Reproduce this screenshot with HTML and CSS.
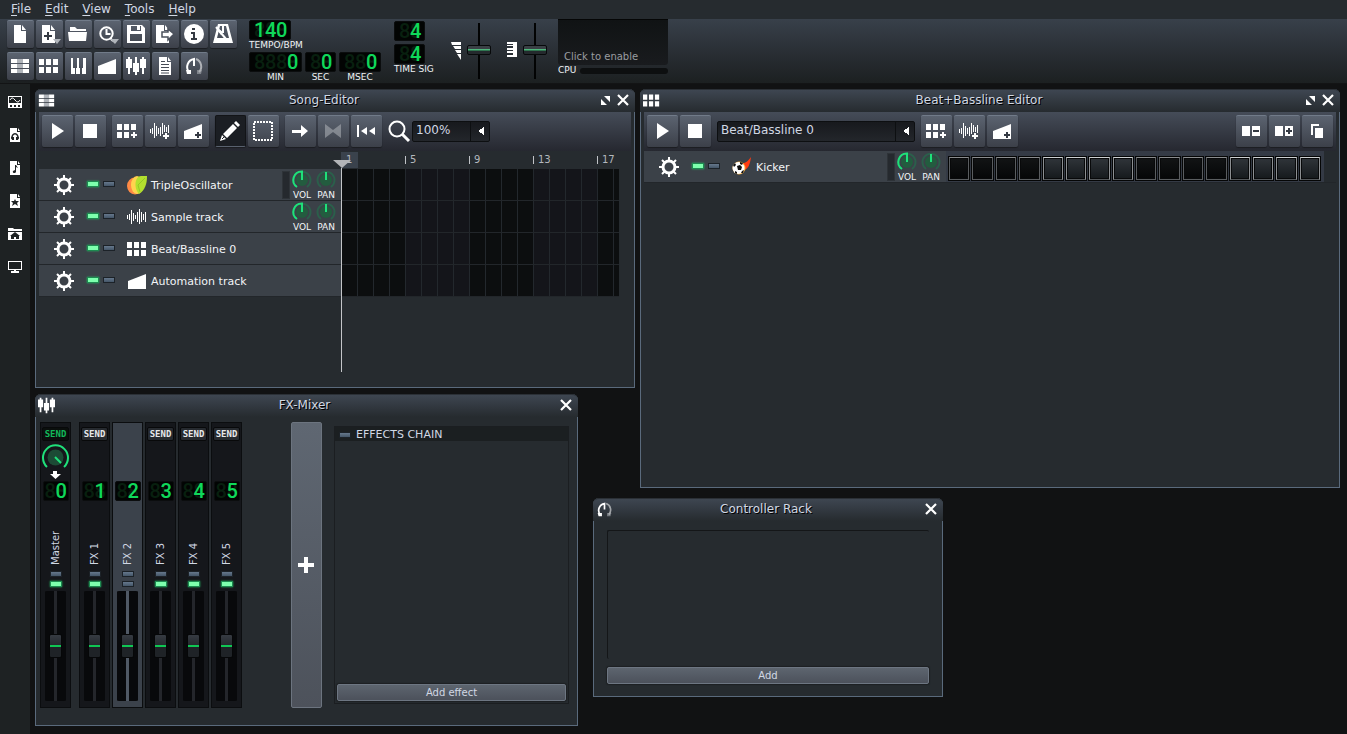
FILE: index.html
```html
<!DOCTYPE html>
<html lang="en">
  <head>
    <meta charset="UTF-8" />
    <meta name="viewport" content="width=device-width, initial-scale=1.0" />
    <title>LMMS</title>
    <link rel="stylesheet" href="styles.css">
  </head>
  <body>

<!-- Icon sprite -->
<svg class="sprite" aria-hidden="true">
  <symbol id="i-file" viewBox="0 0 20 20"><path d="M4 1h7v6h5v12H4zM12 1l4 5h-4z"/></symbol>
  <symbol id="i-new" viewBox="0 0 20 20"><path d="M3 1h8v6h5v12H3zM12 1l4 5h-4z"/><path class="dark" d="M8 8h2v3h3v2h-3v3H8v-3H5v-2h3z"/><path class="dim" d="M14 15h8l-4 5z"/></symbol>
  <symbol id="i-open" viewBox="0 0 20 20"><path d="M2 3h5l2 2h9v2H2zM0 8h19l-1 9H1z"/></symbol>
  <symbol id="i-recent" viewBox="0 0 20 20"><circle class="line" cx="9.500" cy="9.500" r="6.200"/><path class="line" d="M9.500 5v5h4M13 14l3 3"/><path class="dim" d="M13 15h9l-4 5z"/></symbol>
  <symbol id="i-save" viewBox="0 0 20 20"><path fill-rule="evenodd" d="M1 1h15l3 3v15H1zM5 2v5h10V2zM4 10v7h12v-7z"/><path d="M11 2h3v4h-3z"/></symbol>
  <symbol id="i-export" viewBox="0 0 20 20"><path d="M1 1h8v6h5v12H1zM10 1l4 5h-4z"/><path d="M7 8h6V5l6 5-6 6v-3H7z" stroke="#4a505b" stroke-width="1.500"/></symbol>
  <symbol id="i-info" viewBox="0 0 20 20"><circle cx="10" cy="10" r="10"/><path class="dark" d="M8 4h3v2H8zM7 8h4v6h2v2H7v-2h2v-4H7z"/></symbol>
  <symbol id="i-metro" viewBox="0 0 20 20"><path fill-rule="evenodd" d="M5 0h10l5 19H0zM7 2L4 14h12L13 2z"/><path class="line" d="M3 3l10 12"/><path d="M9 2h2v7H9zM6 5l4 3-2 3-3-4z"/></symbol>
  <symbol id="i-song" viewBox="0 0 20 20"><path d="M1 3h6v4H1zM1 8h6v4H1zM1 13h6v4H1zM13 3h6v4h-6zM13 8h6v4h-6zM13 13h6v4h-6z"/><path class="dim" d="M7 3h6v4H7zM7 8h6v4H7zM7 13h6v4H7z"/></symbol>
  <symbol id="i-bb" viewBox="0 0 20 20"><path d="M0 3h5v6H0zM7 3h5v6H7zM14 3h5v6h-5zM0 11h5v6H0zM7 11h5v6H7zM14 11h5v6h-5z"/></symbol>
  <symbol id="i-piano" viewBox="0 0 20 20"><path d="M3 2h2v10h2v6H3zM9 2h2v10h1v6H8v-6h1zM15 2h3v16h-4v-6h1z"/></symbol>
  <symbol id="i-auto" viewBox="0 0 20 20"><path d="M1 10L19 3v15H1z"/></symbol>
  <symbol id="i-mixer" viewBox="0 0 20 20"><path d="M2 1h2v2h2v9H4v6H2v-6H0V3h2zM9 1h2v6h2v9h-2v3H9v-3H7V7h2zM16 1h2v2h2v9h-2v6h-2v-6h-2V3h2z"/></symbol>
  <symbol id="i-notes" viewBox="0 0 20 20"><path d="M4 1h8v5h4v13H4zM13 1l3 4h-3z"/><path class="slit" d="M6 5.500h4M6 8.500h8M6 11.500h8M6 14.500h8M6 17h8"/></symbol>
  <symbol id="i-rack" viewBox="0 0 20 20"><path class="line" d="M5 16A8 8 0 0 1 10 3v7"/><path d="M2 14h5v4H3z"/><path class="line half" d="M12 3a8 8 0 0 1 3 13"/><path class="dim half" d="M13 14h5l-1 4h-4z"/></symbol>
  <symbol id="i-play" viewBox="0 0 20 20"><path d="M5 2l12 8-12 8z"/></symbol>
  <symbol id="i-stop" viewBox="0 0 20 20"><path d="M3 3h14v14H3z"/></symbol>
  <symbol id="i-bbadd" viewBox="0 0 20 20"><path d="M0 3h5v6H0zM7 3h5v6H7zM14 3h5v6h-5zM0 11h5v6H0zM7 11h5v6H7zM16 11h2v2h2v2h-2v2h-2v-2h-2v-2h2z"/></symbol>
  <symbol id="i-wave" viewBox="0 0 20 20"><path d="M0 8h1v4H0zM2 7h1v6H2zM4 3h1v14H4zM6 6h1v8H6zM8 8h1v4H8zM10 5h1v10h-1zM12 2h1v15h-1zM14 5h1v10h-1zM16 7h1v6h-1zM18 5h1v10h-1z"/></symbol>
  <symbol id="i-waveadd" viewBox="0 0 20 20"><path d="M0 8h1v4H0zM2 7h1v6H2zM4 2h1v15H4zM6 5h1v10H6zM8 7h1v6H8zM10 6h1v9h-1zM12 2h1v11h-1zM14 4h1v7h-1zM16 6h1v5h-1zM18 4h1v8h-1zM15 12h2v2h2v2h-2v2h-2v-2h-2v-2h2z"/></symbol>
  <symbol id="i-autoadd" viewBox="0 0 20 20"><path d="M1 10L19 3v15H1z"/><path class="dark" d="M14 11h2v2h2v2h-2v2h-2v-2h-2v-2h2z"/></symbol>
  <symbol id="i-pencil" viewBox="0 0 20 20"><path d="M13 3l4 4L7 17l-4-4zM14 2l2-2 4 4-2 2zM2 14l4 4-6 2z"/><path d="M4 16l-2 2" stroke="#1b1e23"/></symbol>
  <symbol id="i-select" viewBox="0 0 20 20"><rect x="1" y="1" width="18" height="18" fill="none" stroke="#fff" stroke-width="2" stroke-dasharray="2 1"/></symbol>
  <symbol id="i-arrow" viewBox="0 0 20 20"><path d="M2 9h9V4l7 6-7 6v-4H2z"/></symbol>
  <symbol id="i-bowtie" viewBox="0 0 20 20"><path class="dim half" d="M2 3l8 6 8-6v14l-8-6-8 6z"/></symbol>
  <symbol id="i-rewind" viewBox="0 0 20 20"><path d="M1 4h2v12H1zM11 6v8l-6-4zM19 6v8l-6-4z"/></symbol>
  <symbol id="i-zoom" viewBox="0 0 22 22"><circle class="line" cx="9" cy="9" r="7.500"/><path d="M14 14l7 7" stroke="#fff" stroke-width="3"/></symbol>
  <symbol id="i-minus" viewBox="0 0 20 20"><path d="M1 5h8v10H1zM11 5h8v10h-8z"/><path class="dark" d="M12 9h6v2h-6z"/></symbol>
  <symbol id="i-plus" viewBox="0 0 20 20"><path d="M1 5h8v10H1zM11 5h8v10h-8z"/><path class="dark" d="M14 7h2v2h2v2h-2v2h-2v-2h-2V9h2z"/></symbol>
  <symbol id="i-clone" viewBox="0 0 20 20"><path d="M4 3h8v2H6v9H4zM8 7h8v10H8z"/></symbol>
  <symbol id="i-close" viewBox="0 0 12 12"><path d="M1 1l10 10M11 1L1 11" stroke="#fff" stroke-width="2.200"/></symbol>
  <symbol id="i-max" viewBox="0 0 9 9"><path d="M3 0h6v6zM0 3l6 6H0z"/></symbol>
  <symbol id="i-gear" viewBox="0 0 22 22"><circle cx="11" cy="11" r="6" fill="none" stroke="#fff" stroke-width="3"/><path d="M11 1v4M11 17v4M1 11h4M17 11h4M4 4l3 3M15 15l3 3M18 4l-3 3M7 15l-3 3" stroke="#fff" stroke-width="2"/></symbol>
  <symbol id="i-osc" viewBox="0 0 20 20"><ellipse cx="8" cy="11" rx="8" ry="8.500" fill="#ff8a45"/><ellipse cx="10" cy="10" rx="6" ry="9" fill="#ffd34e"/><path d="M20 1c0 8-2 14-8 18C7 14 7 2 14 1z" fill="#b3e02f"/><path d="M18 3l-7 7 2 7" stroke="#93c926" fill="none"/></symbol>
  <symbol id="i-kick" viewBox="0 0 20 20"><path d="M9 6c4 1 7-2 10-6-1 8-3 12-7 13z" fill="#ff3a12"/><circle cx="7" cy="11" r="6.500" fill="#ffb23a"/><circle cx="6.500" cy="11" r="6" fill="#fff"/><path fill="#111" d="M5 9l3-1 2 2-1 3-3 0zM1 8l2-2 1 2-2 2zM8 5l3 1-1 2-2-1zM3 14l2 1 0 2-2-1zM10 14l2-1-1 3-2 0z"/></symbol>
  <symbol id="k-vol" viewBox="0 0 20 20"><circle cx="10" cy="10" r="6" fill="#235c3f"/><path d="M5 17A8.500 8.500 0 1 1 15 17" fill="none" stroke="#2b5f4b" stroke-width="2"/><path d="M5 17A8.500 8.500 0 0 1 10 1.500V10" fill="none" stroke="#1fe07a" stroke-width="2"/></symbol>
  <symbol id="k-pan" viewBox="0 0 20 20"><circle cx="10" cy="10" r="6" fill="#235c3f"/><path d="M5 17A8.500 8.500 0 1 1 15 17" fill="none" stroke="#2b5f4b" stroke-width="2"/><path d="M10 2v8" stroke="#1fe07a" stroke-width="2"/></symbol>
</svg>

<nav class="menubar">
  <button><u>F</u>ile</button>
  <button><u>E</u>dit</button>
  <button><u>V</u>iew</button>
  <button><u>T</u>ools</button>
  <button><u>H</u>elp</button>
</nav>

<header class="main-toolbar">
  <div class="tool-grid">
    <button class="btn small" aria-label="New project"><svg><use href="#i-file"/></svg></button>
    <button class="btn small" aria-label="New from template"><svg><use href="#i-new"/></svg></button>
    <button class="btn small" aria-label="Open"><svg><use href="#i-open"/></svg></button>
    <button class="btn small" aria-label="Recent projects"><svg><use href="#i-recent"/></svg></button>
    <button class="btn small" aria-label="Save"><svg><use href="#i-save"/></svg></button>
    <button class="btn small" aria-label="Export"><svg><use href="#i-export"/></svg></button>
    <button class="btn small" aria-label="What's this"><svg><use href="#i-info"/></svg></button>
    <button class="btn small" aria-label="Metronome"><svg><use href="#i-metro"/></svg></button>
    <button class="btn small" aria-label="Song-Editor"><svg><use href="#i-song"/></svg></button>
    <button class="btn small" aria-label="Beat+Bassline Editor"><svg><use href="#i-bb"/></svg></button>
    <button class="btn small" aria-label="Piano-Roll"><svg><use href="#i-piano"/></svg></button>
    <button class="btn small" aria-label="Automation Editor"><svg><use href="#i-auto"/></svg></button>
    <button class="btn small" aria-label="FX-Mixer"><svg><use href="#i-mixer"/></svg></button>
    <button class="btn small" aria-label="Project notes"><svg><use href="#i-notes"/></svg></button>
    <button class="btn small" aria-label="Controller Rack"><svg><use href="#i-rack"/></svg></button>
  </div>

  <div class="clock">
    <div class="lcd-box left">
      <div class="lcd"><span>1</span><span>4</span><span>0</span></div>
      <div class="lcd-label">TEMPO/BPM</div>
    </div>
    <div class="time">
      <div class="lcd-box">
        <div class="lcd"><span></span><span></span><span></span><span>0</span></div>
        <div class="lcd-label">MIN</div>
      </div>
      <div class="lcd-box">
        <div class="lcd"><span></span><span>0</span></div>
        <div class="lcd-label">SEC</div>
      </div>
      <div class="lcd-box">
        <div class="lcd"><span></span><span></span><span>0</span></div>
        <div class="lcd-label">MSEC</div>
      </div>
    </div>
  </div>

  <div class="timesig">
    <div class="lcd"><span></span><span>4</span></div>
    <div class="lcd"><span></span><span>4</span></div>
    <div class="lcd-label">TIME SIG</div>
  </div>

  <div class="master">
    <svg width="10" height="18" viewBox="0 0 10 18"><path d="M0 0h10v3H1zM2 4h8v3H4zM4 8h6v3H6zM6 12h4v6z"/></svg>
    <input type="range" class="v-slider" aria-label="Master volume" value="53">
    <svg width="10" height="15" viewBox="0 0 10 15"><path d="M0 0h10v15H0v-2h6v-2H0V9h6V8H0V6h6V4H0V3h6V2H0z"/></svg>
    <input type="range" class="v-slider" aria-label="Master pitch" value="53">
  </div>

  <div class="monitor">
    <button class="scope">Click to enable</button>
    <div class="cpu"><span>CPU</span><div class="cpu-bar"></div></div>
  </div>
</header>

<div class="workspace">
  <aside class="sidebar">
    <button aria-label="Instruments"><svg viewBox="0 0 14 14"><path fill-rule="evenodd" d="M0 1h14v12H0zM1 2v6h12V2z"/><path d="M2 5q2-4 5 0t5 0" fill="none" stroke="#fff"/><path class="hole" d="M2 10h2v2H2zM6 10h2v2H6zM10 10h2v2h-2z"/></svg></button>
    <button aria-label="Samples"><svg viewBox="0 0 14 14"><path d="M2 0h7v4h3v10H2zM10 0l2 3h-2z"/><path d="M4 11c-1-7 7-7 6 0" fill="none" stroke="#1e2223" stroke-width="1.500"/><path class="hole" d="M3 9h3v3H4zM8 9h3l-1 3H8z"/></svg></button>
    <button aria-label="Presets"><svg viewBox="0 0 14 14"><path d="M2 0h7v4h3v10H2zM10 0l2 3h-2z"/><path class="hole" d="M7 4h1l2 3-2-1v5c-1 2-4 1-3-1l2-1z"/></svg></button>
    <button aria-label="Favourites"><svg viewBox="0 0 14 14"><path d="M2 0h7v4h3v10H2zM10 0l2 3h-2z"/><path class="hole" d="M7 5l1 2h3L9 9l1 3-3-2-3 2 1-3-2-2h3z"/></svg></button>
    <button aria-label="Home"><svg viewBox="0 0 14 14"><path d="M0 1h5l1 1h8v2H0zM0 5h14v8H0z"/><path class="hole" d="M7 5l5 4h-1v3H8v-2H6v2H3V9H2z"/></svg></button>
    <button aria-label="Computer"><svg viewBox="0 0 14 14"><path fill-rule="evenodd" d="M0 1h14v9H0zM1 2v7h12V2zM6 10h2v1h3v2H3v-2h3z"/></svg></button>
  </aside>

  <main class="desktop">

    <!-- Song editor -->
    <section class="window song">
      <div class="titlebar">
        <svg class="win-icon"><use href="#i-song"/></svg>
        <h2>Song-Editor</h2>
        <button aria-label="Maximize"><svg width="9" height="9"><use href="#i-max"/></svg></button>
        <button aria-label="Close"><svg width="12" height="12"><use href="#i-close"/></svg></button>
      </div>
      <div class="content">
        <div class="toolbar">
          <div class="group">
            <button class="btn" aria-label="Play"><svg><use href="#i-play"/></svg></button>
            <button class="btn" aria-label="Stop"><svg><use href="#i-stop"/></svg></button>
          </div>
          <div class="group">
            <button class="btn" aria-label="Add beat/bassline"><svg><use href="#i-bbadd"/></svg></button>
            <button class="btn" aria-label="Add sample track"><svg><use href="#i-waveadd"/></svg></button>
            <button class="btn" aria-label="Add automation track"><svg><use href="#i-autoadd"/></svg></button>
          </div>
          <div class="group">
            <button class="btn pressed" aria-label="Draw mode"><svg><use href="#i-pencil"/></svg></button>
            <button class="btn" aria-label="Edit mode"><svg><use href="#i-select"/></svg></button>
          </div>
          <div class="group">
            <button class="btn" aria-label="Auto scroll"><svg><use href="#i-arrow"/></svg></button>
            <button class="btn" aria-label="Loop points"><svg><use href="#i-bowtie"/></svg></button>
            <button class="btn" aria-label="Back to start"><svg><use href="#i-rewind"/></svg></button>
          </div>
          <div class="group zoom">
            <label for="zoom"><svg width="22" height="22"><use href="#i-zoom"/></svg></label>
            <select id="zoom" class="combo" aria-label="Zoom"><option>100%</option></select>
          </div>
        </div>

        <div class="ruler">
          <span class="current">1</span><span>5</span><span>9</span><span>13</span><span>17</span>
        </div>

        <div class="tracks">
          <div class="track">
            <div class="track-head">
              <i class="grip"></i>
              <button class="gear" aria-label="Track settings"><svg><use href="#i-gear"/></svg></button>
              <input type="checkbox" class="led" aria-label="Mute" checked><input type="checkbox" class="led" aria-label="Solo">
              <svg class="track-icon"><use href="#i-osc"/></svg>
              <span class="track-name">TripleOscillator</span>
              <i class="activity"></i>
              <div class="knob"><svg><use href="#k-vol"/></svg>VOL</div>
              <div class="knob"><svg><use href="#k-pan"/></svg>PAN</div>
            </div>
            <div class="beats"></div>
          </div>
          <div class="track">
            <div class="track-head">
              <i class="grip"></i>
              <button class="gear" aria-label="Track settings"><svg><use href="#i-gear"/></svg></button>
              <input type="checkbox" class="led" aria-label="Mute" checked><input type="checkbox" class="led" aria-label="Solo">
              <svg class="track-icon"><use href="#i-wave"/></svg>
              <span class="track-name">Sample track</span>
              <div class="knob"><svg><use href="#k-vol"/></svg>VOL</div>
              <div class="knob"><svg><use href="#k-pan"/></svg>PAN</div>
            </div>
            <div class="beats"></div>
          </div>
          <div class="track">
            <div class="track-head">
              <i class="grip"></i>
              <button class="gear" aria-label="Track settings"><svg><use href="#i-gear"/></svg></button>
              <input type="checkbox" class="led" aria-label="Mute" checked><input type="checkbox" class="led" aria-label="Solo">
              <svg class="track-icon"><use href="#i-bb"/></svg>
              <span class="track-name">Beat/Bassline 0</span>
            </div>
            <div class="beats"></div>
          </div>
          <div class="track">
            <div class="track-head">
              <i class="grip"></i>
              <button class="gear" aria-label="Track settings"><svg><use href="#i-gear"/></svg></button>
              <input type="checkbox" class="led" aria-label="Mute" checked><input type="checkbox" class="led" aria-label="Solo">
              <svg class="track-icon"><use href="#i-auto"/></svg>
              <span class="track-name">Automation track</span>
            </div>
            <div class="beats"></div>
          </div>
          <div class="playhead"></div>
        </div>
      </div>
    </section>

    <!-- Beat+Bassline editor -->
    <section class="window bb">
      <div class="titlebar">
        <svg class="win-icon"><use href="#i-bb"/></svg>
        <h2>Beat+Bassline Editor</h2>
        <button aria-label="Maximize"><svg width="9" height="9"><use href="#i-max"/></svg></button>
        <button aria-label="Close"><svg width="12" height="12"><use href="#i-close"/></svg></button>
      </div>
      <div class="content">
        <div class="toolbar">
          <div class="group">
            <button class="btn" aria-label="Play"><svg><use href="#i-play"/></svg></button>
            <button class="btn" aria-label="Stop"><svg><use href="#i-stop"/></svg></button>
          </div>
          <select class="combo wide" aria-label="Pattern"><option>Beat/Bassline 0</option></select>
          <div class="group">
            <button class="btn" aria-label="Add beat/bassline"><svg><use href="#i-bbadd"/></svg></button>
            <button class="btn" aria-label="Add sample track"><svg><use href="#i-waveadd"/></svg></button>
            <button class="btn" aria-label="Add automation track"><svg><use href="#i-autoadd"/></svg></button>
          </div>
          <div class="group end">
            <button class="btn" aria-label="Remove steps"><svg><use href="#i-minus"/></svg></button>
            <button class="btn" aria-label="Add steps"><svg><use href="#i-plus"/></svg></button>
            <button class="btn" aria-label="Clone steps"><svg><use href="#i-clone"/></svg></button>
          </div>
        </div>
        <div class="track">
          <div class="track-head">
            <i class="grip"></i>
            <button class="gear" aria-label="Track settings"><svg><use href="#i-gear"/></svg></button>
            <input type="checkbox" class="led" aria-label="Mute" checked><input type="checkbox" class="led" aria-label="Solo">
            <svg class="track-icon"><use href="#i-kick"/></svg>
            <span class="track-name">Kicker</span>
            <i class="activity"></i>
            <div class="knob"><svg><use href="#k-vol"/></svg>VOL</div>
            <div class="knob"><svg><use href="#k-pan"/></svg>PAN</div>
          </div>
          <div class="steps">
            <input type="checkbox" aria-label="Step 1"><input type="checkbox" aria-label="Step 2"><input type="checkbox" aria-label="Step 3"><input type="checkbox" aria-label="Step 4">
            <input type="checkbox" aria-label="Step 5"><input type="checkbox" aria-label="Step 6"><input type="checkbox" aria-label="Step 7"><input type="checkbox" aria-label="Step 8">
            <input type="checkbox" aria-label="Step 9"><input type="checkbox" aria-label="Step 10"><input type="checkbox" aria-label="Step 11"><input type="checkbox" aria-label="Step 12">
            <input type="checkbox" aria-label="Step 13"><input type="checkbox" aria-label="Step 14"><input type="checkbox" aria-label="Step 15"><input type="checkbox" aria-label="Step 16">
          </div>
        </div>
      </div>
    </section>

    <!-- FX mixer -->
    <section class="window mixer">
      <div class="titlebar">
        <svg class="win-icon"><use href="#i-mixer"/></svg>
        <h2>FX-Mixer</h2>
        <button aria-label="Close"><svg width="12" height="12"><use href="#i-close"/></svg></button>
      </div>
      <div class="mixer-body">
        <div class="channel master-ch">
          <button class="send on">SEND</button>
          <div class="send-knob">
            <svg width="27" height="27" viewBox="0 0 27 27"><circle cx="13.500" cy="13.500" r="8" fill="#1c4b35"/><path d="M5 23A12.500 12.500 0 1 1 22 23" fill="none" stroke="#1fe07a" stroke-width="2"/><path d="M13 13l6 6" stroke="#1fe07a" stroke-width="2"/></svg>
            <svg width="11" height="8" viewBox="0 0 11 8"><path d="M3 0h4v3h4L5.500 8 0 3h3z"/></svg>
          </div>
          <div class="lcd"><span></span><span>0</span></div>
          <div class="ch-name">Master</div>
          <input type="checkbox" class="led" aria-label="Solo Master"><input type="checkbox" class="led" aria-label="Enable Master" checked>
          <input type="range" class="fader" aria-label="Master level">
        </div>
        <div class="channel">
          <button class="send">SEND</button>
          <div class="send-knob"></div>
          <div class="lcd"><span></span><span>1</span></div>
          <div class="ch-name">FX 1</div>
          <input type="checkbox" class="led" aria-label="Solo FX 1"><input type="checkbox" class="led" aria-label="Enable FX 1" checked>
          <input type="range" class="fader" aria-label="FX 1 level">
        </div>
        <div class="channel selected">
          <div class="send-gap"></div>
          <div class="send-knob"></div>
          <div class="lcd"><span></span><span>2</span></div>
          <div class="ch-name">FX 2</div>
          <input type="checkbox" class="led" aria-label="Solo FX 2"><input type="checkbox" class="led" aria-label="Enable FX 2">
          <input type="range" class="fader" aria-label="FX 2 level">
        </div>
        <div class="channel">
          <button class="send">SEND</button>
          <div class="send-knob"></div>
          <div class="lcd"><span></span><span>3</span></div>
          <div class="ch-name">FX 3</div>
          <input type="checkbox" class="led" aria-label="Solo FX 3"><input type="checkbox" class="led" aria-label="Enable FX 3" checked>
          <input type="range" class="fader" aria-label="FX 3 level">
        </div>
        <div class="channel">
          <button class="send">SEND</button>
          <div class="send-knob"></div>
          <div class="lcd"><span></span><span>4</span></div>
          <div class="ch-name">FX 4</div>
          <input type="checkbox" class="led" aria-label="Solo FX 4"><input type="checkbox" class="led" aria-label="Enable FX 4" checked>
          <input type="range" class="fader" aria-label="FX 4 level">
        </div>
        <div class="channel">
          <button class="send">SEND</button>
          <div class="send-knob"></div>
          <div class="lcd"><span></span><span>5</span></div>
          <div class="ch-name">FX 5</div>
          <input type="checkbox" class="led" aria-label="Solo FX 5"><input type="checkbox" class="led" aria-label="Enable FX 5" checked>
          <input type="range" class="fader" aria-label="FX 5 level">
        </div>
        <button class="add-channel" aria-label="Add channel"><svg width="16" height="16" viewBox="0 0 16 16"><path d="M6 0h4v6h6v4h-6v6H6v-6H0V6h6z"/></svg></button>
        <div class="effects">
          <label class="effects-head"><input type="checkbox" class="led">EFFECTS CHAIN</label>
          <div class="effects-list"></div>
          <button class="wide-btn">Add effect</button>
        </div>
      </div>
    </section>

    <!-- Controller rack -->
    <section class="window rack">
      <div class="titlebar">
        <svg class="win-icon"><use href="#i-rack"/></svg>
        <h2>Controller Rack</h2>
        <button aria-label="Close"><svg width="12" height="12"><use href="#i-close"/></svg></button>
      </div>
      <div class="rack-body">
        <div class="rack-list"></div>
        <button class="wide-btn">Add</button>
      </div>
    </section>

  </main>
</div>
  </body>
</html>
```
FILE: styles.css
```css
* {
  box-sizing: border-box;
}

body {
  margin: 0;
  min-height: 100vh;
  display: flex;
  flex-direction: column;
  background: #111213;
  color: #d1d8e4;
  font-family: "DejaVu Sans", sans-serif;
  font-size: 11px;
}

button {
  margin: 0;
  padding: 0;
  border: 0;
  background: none;
  color: inherit;
  font: inherit;
  cursor: pointer;
}

input {
  margin: 0;
}

svg {
  display: block;
  fill: #fff;
  flex: none;
  overflow: visible;
}

symbol {
  overflow: visible;
}

.sprite {
  position: absolute;
  width: 0;
  height: 0;
}

.line {
  fill: none;
  stroke: #fff;
  stroke-width: 2;
}
.dim {
  fill: #b0b4ba;
}
.half {
  opacity: 0.55;
}
.dark {
  fill: #353a43;
}
.slit {
  stroke: #454b56;
}
.hole {
  fill: #1e2223;
}

/* menu + main toolbar */
.menubar {
  display: flex;
  gap: 14px;
  height: 19px;
  padding: 0 11px 2px;
  background: #262b2f;
  font-size: 12px;
  line-height: 16px;
}
.menubar u {
  text-underline-offset: 2px;
}

.main-toolbar {
  display: flex;
  height: 65px;
  padding-left: 7px;
  background: linear-gradient(#38404a, #272c31 60%, #1c2021);
  border-bottom: 1px solid #131415;
}

.tool-grid {
  display: grid;
  grid-template-columns: repeat(8, 27px);
  gap: 4px 2px;
  align-content: start;
  padding-top: 1px;
  width: 242px;
}

.btn {
  display: flex;
  align-items: center;
  justify-content: center;
  width: 31px;
  height: 32px;
  padding: 0 1px 1px 0;
  border-top: 1px solid #717b89;
  border-radius: 2px;
  background: linear-gradient(#5b6370, #3c4049);
  box-shadow: 0 1px 1px #1b1d21;
}
.btn svg {
  width: 20px;
  height: 20px;
}
.btn.small {
  width: 27px;
  height: 28px;
}
.btn.pressed {
  border: 1px solid #121417;
  border-bottom-color: #59616e;
  background: #1b1e23;
}

.clock {
  display: flex;
  flex-direction: column;
  gap: 2px;
  padding-top: 1px;
  width: 145px;
}
.time {
  display: flex;
  gap: 3px;
}
.lcd-box {
  display: flex;
  flex-direction: column;
  align-items: center;
}
.lcd-box.left {
  align-items: flex-start;
}
.lcd-label {
  font-size: 9px;
  line-height: 10px;
  color: #f0f2f5;
  white-space: nowrap;
}

.lcd {
  display: flex;
  width: max-content;
  height: 20px;
  padding: 0 3px 0 4px;
  border: 1px solid #0b0d0e;
  border-radius: 2px;
  background: #020403;
  font-family: Roboto, sans-serif;
  font-size: 20px;
  font-weight: 500;
  line-height: 18px;
  color: #0fd85a;
}
.lcd span {
  position: relative;
  isolation: isolate;
  width: 11px;
  height: 18px;
  text-align: center;
}
/* unlit segments sit behind each digit */
.lcd span::before {
  content: "8";
  position: absolute;
  inset: 0;
  z-index: -1;
  color: #08200f;
}

.timesig {
  display: flex;
  flex-direction: column;
  gap: 3px;
  padding-top: 2px;
  width: 57px;
}
.timesig .lcd-label {
  margin-top: -3px;
}

.master {
  display: flex;
  align-items: flex-start;
  gap: 6px;
  width: 107px;
}
.master svg {
  margin-top: 23px;
}
.v-slider {
  appearance: none;
  writing-mode: vertical-lr;
  direction: rtl;
  width: 24px;
  height: 56px;
  margin: 4px 10px 0 0;
  background: linear-gradient(#020303, #020303) center / 2px 100% no-repeat;
}
.v-slider::-webkit-slider-thumb {
  appearance: none;
  width: 24px;
  height: 10px;
  border: 1px solid #07090a;
  border-radius: 2px;
  background: linear-gradient(#3a4045 3px, #4fb87c 3px 4px, #2f7550 4px 5px, #24292d 5px);
}

.monitor {
  width: 110px;
}
.scope {
  display: flex;
  align-items: flex-end;
  width: 110px;
  height: 46px;
  padding: 0 6px 1px;
  border-top: 1px solid #050606;
  border-radius: 0 0 3px 3px;
  background: linear-gradient(#101314, #191b1e);
  color: #9a9da0;
  font-size: 10px;
  line-height: 14px;
  white-space: nowrap;
}
.cpu {
  display: flex;
  gap: 4px;
  align-items: center;
  font-size: 9px;
  line-height: 11px;
  color: #f0f2f5;
}
.cpu-bar {
  flex: 1;
  height: 6px;
  border-radius: 3px;
  background: #0d0f10;
}

/* sidebar + desktop */
.workspace {
  flex: 1;
  display: flex;
}
.sidebar {
  display: flex;
  flex-direction: column;
  gap: 19px;
  width: 30px;
  padding-top: 11px;
  align-items: center;
  background: #1e2223;
}
.sidebar svg {
  width: 14px;
  height: 14px;
}
.desktop {
  position: relative;
  flex: 1;
  overflow: hidden;
}

.window {
  position: absolute;
  display: flex;
  flex-direction: column;
  background: #262b2f;
  border: 1px solid #5a6a7c;
  border-top: 0;
  border-radius: 6px 6px 0 0;
}
.song {
  left: 5px;
  top: 5px;
  width: 600px;
  height: 299px;
}
.bb {
  left: 610px;
  top: 5px;
  width: 700px;
  height: 399px;
}
.mixer {
  left: 5px;
  top: 310px;
  width: 543px;
  height: 332px;
}
.rack {
  left: 563px;
  top: 414px;
  width: 350px;
  height: 199px;
}

.titlebar {
  display: flex;
  align-items: center;
  height: 23px;
  margin: 0 -1px;
  padding: 0 3px 2px;
  border-top: 1px solid #2b3036;
  border-radius: 6px 6px 0 0;
  background: linear-gradient(#3e4651, #262b2f);
}
.titlebar h2 {
  flex: 1;
  margin: 0 3px 0 0;
  font-size: 12px;
  font-weight: normal;
  line-height: 20px;
  text-align: center;
  text-shadow: 1px 1px 0 #000;
}
.titlebar button {
  display: flex;
  align-items: center;
  justify-content: center;
  width: 18px;
  height: 18px;
}
.win-icon {
  width: 17px;
  height: 17px;
}

.content {
  padding: 0 3px;
}
.toolbar {
  display: flex;
  align-items: center;
  gap: 6px;
  height: 39px;
  padding: 0 3px 1px;
  background: linear-gradient(#454c58, #262830);
}
.group {
  display: flex;
  align-items: center;
  gap: 2px;
}
.group.end {
  margin-left: auto;
}

.combo {
  appearance: none;
  width: 78px;
  height: 21px;
  padding: 0 24px 2px 3px;
  border: 1px solid #0d0f11;
  border-radius: 2px;
  background:
    conic-gradient(from 55deg at 0 50%, #fff 70deg, transparent 0) right 5px center / 6px 10px no-repeat,
    linear-gradient(#0d0f11, #0d0f11) right 18px top / 1px 100% no-repeat,
    linear-gradient(#17191d, #23262b);
  color: #d1d8e4;
  font: 12px "DejaVu Sans", sans-serif;
}
.combo.wide {
  width: 198px;
}

/* song timeline */
.ruler {
  display: flex;
  height: 18px;
  padding: 1px 0 1px 302px;
  font-size: 10px;
  line-height: 16px;
  color: #b4b8bd;
}
.ruler span {
  position: relative;
  width: 64px;
  padding-left: 5px;
}
.ruler span:last-child {
  width: auto;
}
.ruler span::before {
  content: "";
  position: absolute;
  left: 0;
  top: 4px;
  width: 1px;
  height: 8px;
  background: #c0c3c7;
}
.ruler .current {
  background: linear-gradient(#3a424c, #3a424c) 0 0 / 17px 100% no-repeat;
}
.ruler .current::before {
  display: none;
}

.tracks {
  position: relative;
  width: fit-content;
}
.track {
  display: flex;
  height: 32px;
  border-bottom: 1px solid #22262a;
}
.track-head {
  display: flex;
  align-items: center;
  width: 302px;
  height: 31px;
  padding-left: 2px;
  background: #3b4148;
}
.grip {
  width: 6px;
  height: 26px;
  background:
    radial-gradient(#22262b 1px, transparent 1px) 0 0 / 12px 4px,
    radial-gradient(#22262b 1px, transparent 1px) 4px 2px / 12px 4px;
}
.gear {
  margin: 0 12px 0 6px;
}
.gear svg {
  width: 22px;
  height: 22px;
}
.led {
  appearance: none;
  flex: none;
  width: 12px;
  height: 6px;
  border: 1px solid #1c2228;
  background: linear-gradient(#66788c, #445668);
}
.led:checked {
  border-color: #1d8a50;
  background: #7dffad;
  box-shadow: 0 0 2px #27c86c;
}
.track-head .led {
  margin-bottom: 1px;
}
.track-head .led + .led {
  margin-left: 4px;
}
.track-icon {
  width: 20px;
  height: 20px;
  margin: 0 4px 0 12px;
}
.track-name {
  flex: 1;
  padding-top: 2px;
  color: #f2f4f7;
}
.activity {
  width: 8px;
  height: 28px;
  background: #25292e;
  border: 1px solid #2e3338;
}
.knob {
  width: 24px;
  padding-top: 2px;
  font-size: 9px;
  line-height: 10px;
  text-align: center;
  color: #f2f4f7;
}
.knob svg {
  width: 20px;
  height: 20px;
  margin: -1px auto 0;
}
.knob:last-child {
  margin-right: 3px;
}
.beats {
  width: 278px;
  background:
    repeating-linear-gradient(90deg, #23282d 0 1px, transparent 1px 16px),
    repeating-linear-gradient(90deg, #0c0e0f 0 64px, #14151a 64px 128px);
}
.playhead {
  position: absolute;
  left: 302px;
  top: -1px;
  width: 1px;
  height: 204px;
  background: #c3c5c8;
}
.playhead::before {
  content: "";
  position: absolute;
  left: -8px;
  top: -8px;
  border: 9px solid transparent;
  border-top: 8px solid #b3b5b8;
  border-bottom: 0;
}

/* step sequencer */
.steps {
  flex: 1;
  display: grid;
  grid-template-columns: repeat(16, 1fr);
  gap: 1px;
  margin-right: 12px;
  padding: 5px 3px 1px 2px;
  background: #343a45;
}
.steps input {
  appearance: none;
  margin: 1px;
  border: 1px solid #5a5d60;
  border-top-color: #8a8c8e;
  outline: 1px solid #050606;
  box-shadow: inset 0 0 0 1px #08090a;
  background: linear-gradient(#121415, #050607);
}
.steps input:nth-child(8n + 5),
.steps input:nth-child(8n + 6),
.steps input:nth-child(8n + 7),
.steps input:nth-child(8n + 8) {
  border-color: #cdd0d2 #8c8f92 #55595c;
  background: linear-gradient(#30353a, #15191c);
}

/* fx mixer */
.mixer-body {
  flex: 1;
  display: flex;
  gap: 2px;
  padding: 5px 8px 17px 4px;
}
.channel {
  display: flex;
  flex-direction: column;
  align-items: center;
  width: 31px;
  height: 286px;
  padding-top: 4px;
  border: 1px solid #0b0d0f;
  background: #15171b;
}
.master-ch {
  margin-right: 6px;
}
.channel.selected {
  background: #3b424b;
}
.send,
.send-gap {
  flex: none;
  width: 27px;
  height: 14px;
}
.send {
  border: 1px solid #08090a;
  border-radius: 2px;
  background: #262a2f;
  color: #e6e8ea;
  font: bold 9px/12px "DejaVu Sans Mono", monospace;
}
.send.on {
  background: #0b0f0d;
  color: #12b95a;
}
.send-knob {
  display: flex;
  flex-direction: column;
  align-items: center;
  height: 40px;
  padding-top: 3px;
}
.channel .lcd {
  padding: 0 1px;
}
.ch-name {
  height: 67px;
  margin-bottom: 3px;
  padding-top: 3px;
  writing-mode: vertical-rl;
  transform: rotate(180deg);
  font-size: 10px;
  line-height: 12px;
  color: #d1d8e4;
}
.channel .led {
  margin-bottom: 4px;
}
.fader {
  appearance: none;
  writing-mode: vertical-lr;
  direction: rtl;
  width: 23px;
  height: 110px;
  background:
    linear-gradient(#08090b, #08090b) 1px 0 / 9px 100% no-repeat,
    linear-gradient(#08090b, #08090b) 13px 0 / 9px 100% no-repeat,
    linear-gradient(#24262b, #24262b) center / 21px 100% no-repeat;
  border-radius: 3px;
}
.selected .fader {
  background:
    linear-gradient(#08090b, #08090b) 1px 0 / 9px 100% no-repeat,
    linear-gradient(#08090b, #08090b) 13px 0 / 9px 100% no-repeat,
    linear-gradient(#505965, #505965) center / 5px 100% no-repeat;
}
.fader::-webkit-slider-thumb {
  appearance: none;
  width: 13px;
  height: 24px;
  border: 1px solid #060708;
  border-radius: 2px;
  background: linear-gradient(#363b42, #25292e 10px, #0fc653 10px 12px, #1f2327 12px);
}

.add-channel {
  display: flex;
  align-items: center;
  justify-content: center;
  width: 31px;
  height: 286px;
  margin-left: auto;
  padding-right: 2px;
  border: 1px solid #6c747f;
  border-radius: 2px;
  background: linear-gradient(#5f6772, #4d525b);
}
.effects {
  display: flex;
  flex-direction: column;
  width: 235px;
  height: 278px;
  margin: 4px 0 0 10px;
  padding-bottom: 2px;
  border: 1px solid #1b1e21;
}
.effects-head {
  display: flex;
  align-items: center;
  gap: 5px;
  height: 14px;
  padding: 1px 0 0 4px;
  background: #1b1f21;
}
.effects-list {
  flex: 1;
}
.wide-btn {
  height: 17px;
  border: 1px solid #6d7682;
  border-radius: 2px;
  background: linear-gradient(#5d656f, #4c515b);
  box-shadow: 0 0 1px 1px #1d2023;
  font-size: 10px;
  line-height: 15px;
}
.effects .wide-btn {
  margin: 0 2px;
}

.rack-body {
  flex: 1;
  display: flex;
  flex-direction: column;
  gap: 8px;
  padding: 9px 13px 12px;
}
.rack-list {
  flex: 1;
  border-top: 1px solid #141618;
  border-left: 1px solid #141618;
  border-radius: 2px;
}
```
